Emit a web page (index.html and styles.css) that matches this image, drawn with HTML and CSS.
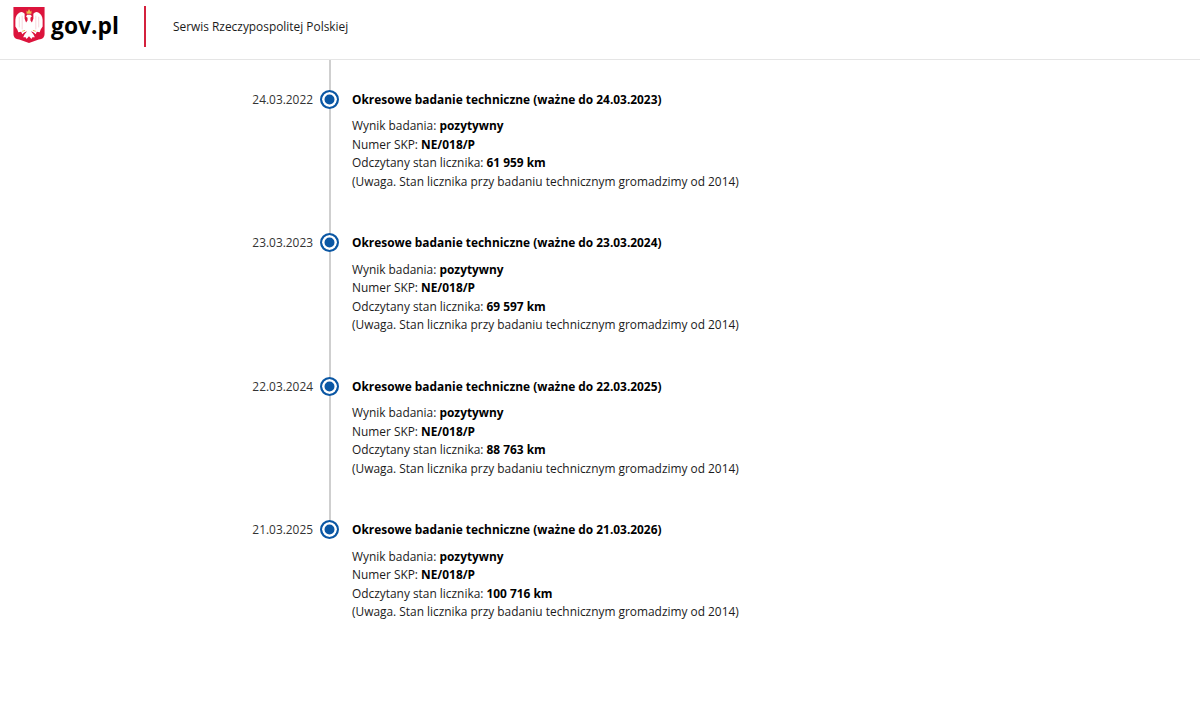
FILE: index.html
```html
<!DOCTYPE html>
<html lang="pl">
<head>
  <meta charset="UTF-8">
  <title>gov.pl</title>
  <link rel="stylesheet" href="styles.css">
</head>
<body>
  <div class="header">
    <div class="logo">
      <svg class="emblem" viewBox="0 0 32 37" width="32" height="36">
        <path d="M0 0H32V28Q32 33 26 33.500L16 37L6 33.500Q0 33 0 28Z" fill="#dc143c"/>
        <path d="M13.500 3.500L14.500 5L16 2L17.500 5L18.500 3.500V7H13.500Z" fill="#e9bc4f"/>
        <path d="M14 8H17.500L19 9.500L17.500 11V14L19 16L20.500 12V7Q23 4 26 6Q29.500 8 30 13V20L28 23L27 26L24 25.500L23 28L20.500 26L18 25L20.500 28L22 31H19.500L18.500 33L16 30L13.500 33L12.500 31H10L11.500 28L14 25L11.500 26L9 28L8 25.500L5 26L4 23L2 20V13Q2.500 8 6 6Q9 4 11.500 7V12L13 16L14.500 14V11L13 10Z" fill="#fff"/>
        <path d="M6 10V21M9 9V23M23 9V23M26 10V21" stroke="#f3c4cd" stroke-width=".7" fill="none"/>
        <path d="M9 25L12 24M23 25L20 24" stroke="#e9bc4f" stroke-width="1" fill="none"/>
      </svg>
      <span class="logo-text">gov.pl</span>
    </div>
    <div class="header-divider"></div>
    <span class="header-title">Serwis Rzeczypospolitej Polskiej</span>
  </div>

  <div class="timeline">
    <div class="item">
      <div class="date">24.03.2022</div>
      <div class="dot"></div>
      <div class="details">
        <div class="item-title">Okresowe badanie techniczne (ważne do 24.03.2023)</div>
        <div>Wynik badania: <b>pozytywny</b></div>
        <div>Numer SKP: <b>NE/018/P</b></div>
        <div>Odczytany stan licznika: <b>61 959 km</b></div>
        <div>(Uwaga. Stan licznika przy badaniu technicznym gromadzimy od 2014)</div>
      </div>
    </div>
    <div class="item">
      <div class="date">23.03.2023</div>
      <div class="dot"></div>
      <div class="details">
        <div class="item-title">Okresowe badanie techniczne (ważne do 23.03.2024)</div>
        <div>Wynik badania: <b>pozytywny</b></div>
        <div>Numer SKP: <b>NE/018/P</b></div>
        <div>Odczytany stan licznika: <b>69 597 km</b></div>
        <div>(Uwaga. Stan licznika przy badaniu technicznym gromadzimy od 2014)</div>
      </div>
    </div>
    <div class="item">
      <div class="date">22.03.2024</div>
      <div class="dot"></div>
      <div class="details">
        <div class="item-title">Okresowe badanie techniczne (ważne do 22.03.2025)</div>
        <div>Wynik badania: <b>pozytywny</b></div>
        <div>Numer SKP: <b>NE/018/P</b></div>
        <div>Odczytany stan licznika: <b>88 763 km</b></div>
        <div>(Uwaga. Stan licznika przy badaniu technicznym gromadzimy od 2014)</div>
      </div>
    </div>
    <div class="item">
      <div class="date">21.03.2025</div>
      <div class="dot"></div>
      <div class="details">
        <div class="item-title">Okresowe badanie techniczne (ważne do 21.03.2026)</div>
        <div>Wynik badania: <b>pozytywny</b></div>
        <div>Numer SKP: <b>NE/018/P</b></div>
        <div>Odczytany stan licznika: <b>100 716 km</b></div>
        <div>(Uwaga. Stan licznika przy badaniu technicznym gromadzimy od 2014)</div>
      </div>
    </div>
  </div>
</body>
</html>
```

FILE: styles.css
```css
body {
  margin: 0;
  background: #fff;
  color: #1b1b1b;
  font-family: "Open Sans", sans-serif;
  font-size: 11.9px;
  line-height: 18.6px;
}
.header {
  display: flex;
  align-items: center;
  height: 59px;
  padding-left: 13px;
  border-bottom: 1px solid #e5e5e5;
}
.logo {
  display: flex;
  align-items: center;
  gap: 6px;
  width: 131px;
}
.emblem {
  display: block;
  margin-top: -9px;
}
.logo-text {
  margin-top: -7px;
  font-size: 22.8px;
  font-weight: 700;
  line-height: 30px;
  color: #000;
}
.header-divider {
  width: 2px;
  height: 41px;
  margin-top: -7px;
  background: #d4213d;
}
.header-title {
  margin-left: 27px;
  margin-top: -6px;
}
.timeline {
  position: relative;
  padding-top: 29.8px;
}
.timeline:before {
  content: "";
  position: absolute;
  top: 0;
  bottom: 135px;
  left: 329px;
  width: 2px;
  background: #cfcfcf;
}
.item {
  display: flex;
  align-items: flex-start;
  height: 143.5px;
}
.date {
  width: 313px;
  text-align: right;
  color: #333;
}
.dot {
  position: relative;
  box-sizing: border-box;
  flex: none;
  width: 19px;
  height: 19px;
  margin: 0 13px 0 7px;
  border: 2px solid #0b57a4;
  border-radius: 50%;
  background: #0b57a4;
  box-shadow: inset 0 0 0 2.5px #fff;
}
.item-title {
  margin-bottom: 7.8px;
  font-weight: 700;
  color: #000;
}
.details b {
  color: #000;
}
```
